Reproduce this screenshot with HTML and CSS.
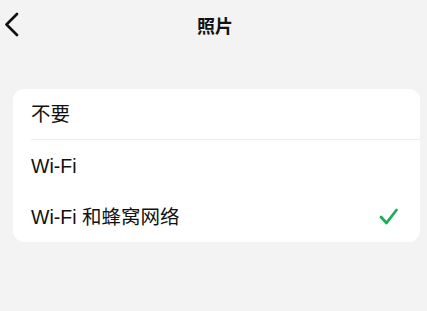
FILE: index.html
```html
<!DOCTYPE html>
<html lang="zh-CN">
<head>
<meta charset="utf-8">
<link rel="stylesheet" href="styles.css">
</head>
<body>
<div class="page">
  <header class="nav">
    <div class="back">
      <svg width="24" height="50" viewBox="0 0 24 50">
        <path d="M17 14 L6.5 24.5 L17 35" fill="none" stroke="#111" stroke-width="2.7" stroke-linecap="round" stroke-linejoin="round"/>
      </svg>
    </div>
    <div class="title">照片</div>
    <div class="spacer"></div>
  </header>
  <div class="card">
    <div class="row sep"><span class="label">不要</span></div>
    <div class="row"><span class="label">Wi-Fi</span></div>
    <div class="row"><span class="label">Wi-Fi 和蜂窝网络</span>
      <svg class="check" width="20" height="20" viewBox="0 0 20 20">
        <path d="M2 9 L7.5 15 L17.5 2" fill="none" stroke="#1aad5a" stroke-width="2.8" stroke-linecap="round" stroke-linejoin="round"/>
      </svg>
    </div>
  </div>
</div>
</body>
</html>
```
FILE: styles.css
```css
html, body {
  margin: 0;
  padding: 0;
  background: #f3f3f3;
}
body {
  font-family: "Liberation Sans", "Noto Sans CJK SC", sans-serif;
  color: #111;
}
.page {
  width: 427px;
  height: 311px;
}
.nav {
  height: 50px;
  display: grid;
  grid-template-columns: 40px 1fr 40px;
  align-items: center;
}
.back {
  height: 50px;
  display: flex;
}
.back svg {
  display: block;
}
.title {
  text-align: center;
  font-size: 18px;
  font-weight: bold;
  font-family: "Noto Sans CJK SC", sans-serif;
  line-height: 50px;
  padding-left: 3px;
}
.card {
  margin: 39px 7px 0 13px;
  background: #fff;
  border-radius: 11px;
  padding: 0;
}
.row {
  height: 51px;
  margin-left: 18px;
  padding-right: 21px;
  display: flex;
  align-items: center;
  justify-content: space-between;
  font-size: 19.5px;
}
.row.sep {
  height: 50px;
  border-bottom: 1px solid #ececec;
}
.label {
  line-height: 1;
  padding-top: 2px;
}
.check {
  display: block;
  margin-top: 2px;
}
```
